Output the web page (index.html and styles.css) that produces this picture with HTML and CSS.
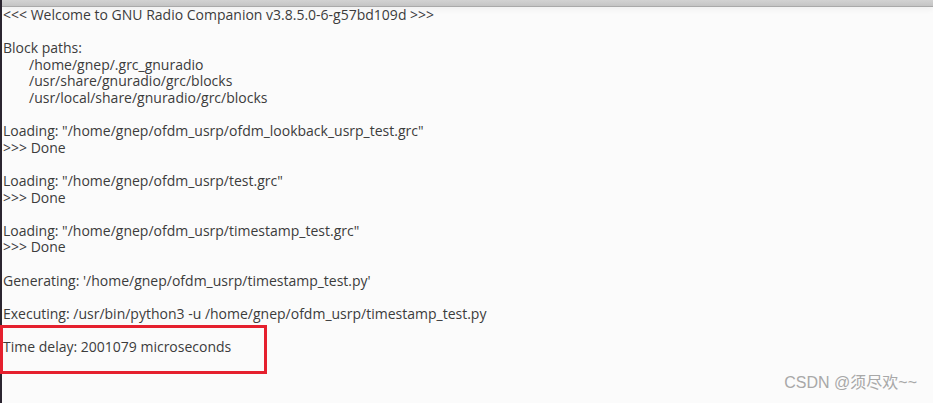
FILE: index.html
```html
<!DOCTYPE html>
<html>
<head>
<meta charset="utf-8">
<link rel="stylesheet" href="styles.css">
</head>
<body>
<div class="window">
  <div class="topbar"></div>
  <div class="console">
    <div class="line">&lt;&lt;&lt; Welcome to GNU Radio Companion v3.8.5.0-6-g57bd109d &gt;&gt;&gt;</div>
    <div class="line blank"></div>
    <div class="line">Block paths:</div>
    <div class="line indent">/home/gnep/.grc_gnuradio</div>
    <div class="line indent">/usr/share/gnuradio/grc/blocks</div>
    <div class="line indent">/usr/local/share/gnuradio/grc/blocks</div>
    <div class="line blank"></div>
    <div class="line">Loading: "/home/gnep/ofdm_usrp/ofdm_lookback_usrp_test.grc"</div>
    <div class="line">&gt;&gt;&gt; Done</div>
    <div class="line blank"></div>
    <div class="line">Loading: "/home/gnep/ofdm_usrp/test.grc"</div>
    <div class="line">&gt;&gt;&gt; Done</div>
    <div class="line blank"></div>
    <div class="line">Loading: "/home/gnep/ofdm_usrp/timestamp_test.grc"</div>
    <div class="line">&gt;&gt;&gt; Done</div>
    <div class="line blank"></div>
    <div class="line">Generating: '/home/gnep/ofdm_usrp/timestamp_test.py'</div>
    <div class="line blank"></div>
    <div class="line">Executing: /usr/bin/python3 -u /home/gnep/ofdm_usrp/timestamp_test.py</div>
    <div class="line blank"></div>
    <div class="line">Time delay: 2001079 microseconds</div>
  </div>
  <div class="highlight"></div>
  <div class="watermark">CSDN @须尽欢~~</div>
</div>
</body>
</html>
```
FILE: styles.css
```css
html, body {
  margin: 0;
  padding: 0;
}
body {
  width: 933px;
  height: 403px;
  overflow: hidden;
  background: #fbfbfb;
}
.window {
  position: relative;
  width: 933px;
  height: 403px;
  background: #fbfbfb;
  border-left: 2px solid #2b2530;
  box-sizing: border-box;
}
.topbar {
  height: 6px;
  background: linear-gradient(#d2d2d2, #c4c4c4);
  border-bottom: 1px solid #a9a9a9;
  box-shadow: 0 2px 6px rgba(0,0,0,0.06);
}
.console {
  padding: 0 0 0 1px;
  font-family: "Open Sans", "Noto Sans", sans-serif;
  font-size: 14px;
  line-height: 16.6px;
  color: #3c3c3c;
}
.line {
  height: 16.6px;
  white-space: pre;
}
.indent {
  padding-left: 26px;
}
.highlight {
  position: absolute;
  left: -2px;
  top: 325px;
  width: 261px;
  height: 43px;
  border: 3px solid #e5202e;
}
.watermark {
  position: absolute;
  right: 16px;
  bottom: 10px;
  font-family: "Liberation Sans", "Noto Sans CJK SC", sans-serif;
  font-size: 16px;
  color: #a8a8a8;
}
```
